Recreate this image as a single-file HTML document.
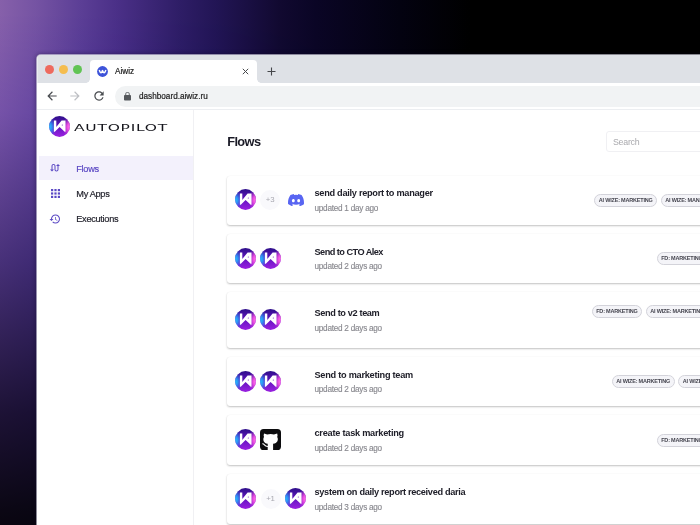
<!DOCTYPE html>
<html lang="en">
<head>
<meta charset="utf-8">
<title>Aiwiz</title>
<style>
*{box-sizing:border-box;margin:0;padding:0}
html,body{width:700px;height:525px;overflow:hidden;background:#000}
body{position:relative;font-family:"Liberation Sans",sans-serif;color:#1f1f2b}
.abs{position:absolute}
#bg{left:0;top:0;width:700px;height:525px;
 background:
  linear-gradient(to bottom,#ffffff 0px,#ffffff 13px,#dfdafc 113px,#8780b4 263px,#373050 413px,#15131e 511px,#121019 525px),
  linear-gradient(to right,#8660aa 0px,#7553a3 36px,#5c3f96 80px,#4b3088 116px,#2e1d66 180px,#221555 216px,#110930 280px,#0a0525 316px,#030210 400px,#000000 470px);
 background-blend-mode:multiply}
#win{left:37px;top:55px;width:700px;height:500px;background:#dee1e6;border-top-left-radius:4px;
 box-shadow:0 0 0 1px rgba(226,226,236,.6),0 0 4px 1px rgba(10,0,30,.4)}
#clip{left:0;top:0;width:700px;height:500px;border-top-left-radius:4px;overflow:hidden}
#in{left:-1px;top:-1px;width:701px;height:501px;will-change:transform}
#tabbar{left:0;top:0;width:701px;height:29px;background:#dee1e6;box-shadow:inset 0 1px 0 rgba(255,255,255,.28),inset 2px 0 0 rgba(255,255,255,.4)}
.tl{width:9px;height:9px;border-radius:50%;top:11px}
#tab{left:54px;top:6px;width:167px;height:23px;background:#fff;border-radius:4px 4px 0 0}
#tab:before,#tab:after{content:"";position:absolute;bottom:0;width:4px;height:4px;background:radial-gradient(circle at 0 0,rgba(255,255,255,0) 3.5px,#fff 4px)}
#tab:before{left:-4px}
#tab:after{right:-4px;transform:scaleX(-1)}
#toolbar{left:0;top:29px;width:701px;height:27px;background:#fff;border-bottom:1px solid #eceef1}
#omni{left:78.5px;top:3px;width:640px;height:21px;border-radius:10.5px;background:#f1f3f4}
.chrome-txt{-webkit-text-stroke:.2px currentColor;font-size:8.2px;white-space:nowrap;color:#222;line-height:10px}
#side{left:0;top:56px;width:158px;height:445px;background:#fff;border-right:1px solid #f0f0f3}
.nav{left:3px;width:154px;height:24.400px}
.nav span{-webkit-text-stroke:.2px currentColor;position:absolute;left:37.300px;top:7.600px;font-size:9.200px;line-height:11px;letter-spacing:-.3px;color:#25252f;white-space:nowrap}
.nav svg{position:absolute}
.nav.act{background:#f3f1fc}
.nav.act span{color:#5b49c4}
#main{left:158px;top:56px;width:543px;height:445px;background:#fff}
h1{position:absolute;left:191.200px;top:79.600px;font-size:12.8px;line-height:16px;font-weight:bold;letter-spacing:-.6px;color:#1a1a26;white-space:nowrap}
#search{left:570px;top:77px;width:140px;height:21px;border:1px solid #f0f0f3;border-radius:3px;background:#fff}
#search span{position:absolute;left:6px;top:4.5px;font-size:8.8px;line-height:11px;letter-spacing:-.25px;color:#a9a9ad}
.card{left:191px;width:520px;background:#fff;border-radius:3px;box-shadow:0 1px 2px rgba(0,0,0,.24),0 0 1px rgba(0,0,0,.05)}
.t{position:absolute;left:87.500px;margin-top:.7px;font-size:9.200px;line-height:11px;font-weight:bold;letter-spacing:-.28px;color:#20202a;white-space:nowrap}
.s{-webkit-text-stroke:.15px currentColor;position:absolute;left:87.500px;margin-top:.9px;font-size:8.200px;line-height:10px;letter-spacing:-.25px;color:#8a8a90;white-space:nowrap}
.av{position:absolute;width:21px;height:21px}
.more{position:absolute;width:20px;height:20px;border-radius:50%;background:#f9f9fc;color:#a8a8b0;font-size:7.8px;line-height:20px;text-align:center;letter-spacing:-.1px}
.tag{position:absolute;height:12.5px;border:1px solid #d3d3da;border-radius:7px;background:#f4f4f8;font-size:5.5px;font-weight:bold;letter-spacing:-.19px;line-height:10.5px;padding:0 3.700px;color:#45454f;white-space:nowrap}
</style>
</head>
<body>
<svg width="0" height="0" style="position:absolute">
 <defs>
  <linearGradient id="gv" x1="0" y1="0" x2="0" y2="1"><stop offset="0" stop-color="#2e0f8a"/><stop offset=".5" stop-color="#6414c0"/><stop offset="1" stop-color="#9a20e0"/></linearGradient>
  <radialGradient id="gl" cx="0" cy=".52" r=".5" gradientTransform="translate(0 .52) scale(.75 1) translate(0 -.52)"><stop offset="0" stop-color="#24c8ff"/><stop offset=".35" stop-color="#2aa0f8" stop-opacity=".9"/><stop offset="1" stop-color="#3060e8" stop-opacity="0"/></radialGradient>
  <radialGradient id="gr" cx="1" cy=".52" r=".5" gradientTransform="translate(1 .52) scale(.75 1) translate(-1 -.52)"><stop offset="0" stop-color="#ff78ee"/><stop offset=".35" stop-color="#fa58e2" stop-opacity=".9"/><stop offset="1" stop-color="#e040e0" stop-opacity="0"/></radialGradient>
  <symbol id="logo" viewBox="0 0 21 21">
   <circle cx="10.5" cy="10.5" r="10.4" fill="url(#gv)"/>
   <circle cx="10.5" cy="10.5" r="10.4" fill="url(#gl)"/><circle cx="10.5" cy="10.5" r="10.4" fill="url(#gr)"/>
   <path d="M4.9 4.5H7.3V10.9L12.6 4.5H16.5V15.8H15.7L10.6 10.9L5.8 15.8H4.9Z" fill="#fff"/>
   <circle cx="13.3" cy="9" r=".55" fill="#6a1fb8"/>
  </symbol>
 </defs>
</svg>
<div id="bg" class="abs"></div>
<div id="win" class="abs"><div id="clip" class="abs"><div id="in" class="abs">
 <div id="tabbar" class="abs">
  <div class="abs tl" style="left:9px;background:#ee6a5e"></div>
  <div class="abs tl" style="left:23px;background:#f5bd4f"></div>
  <div class="abs tl" style="left:36.5px;background:#61c454"></div>
  <div id="tab" class="abs">
   <svg class="abs" style="left:7px;top:6px" width="11" height="11" viewBox="0 0 11 11"><circle cx="5.5" cy="5.5" r="5.4" fill="#3d53d9"/><path d="M2.4 4.6q.8 2.2 1.6 2.2t1.5-2.2q.8 2.2 1.6 2.2t1.6-2.2" fill="none" stroke="#fff" stroke-width="1.5" stroke-linecap="round" stroke-linejoin="round"/></svg>
   <span class="abs chrome-txt" style="left:25px;top:6.5px">Aiwiz</span>
   <svg class="abs" style="left:152px;top:8px" width="7" height="7" viewBox="0 0 7 7"><path d="M.8.8l5.4 5.4M6.2.8L.8 6.2" stroke="#45474a" stroke-width="1" fill="none"/></svg>
  </div>
  <svg class="abs" style="left:231px;top:13px" width="9" height="9" viewBox="0 0 9 9"><path d="M4.5.5v8M.5 4.5h8" stroke="#45474a" stroke-width="1.1" fill="none"/></svg>
 </div>
 <div id="toolbar" class="abs">
  <svg class="abs" style="left:8.500px;top:6px" width="14" height="14" viewBox="0 0 24 24"><path fill="#4a4d51" d="M20 11H7.83l5.59-5.59L12 4l-8 8 8 8 1.41-1.41L7.83 13H20v-2z"/></svg>
  <svg class="abs" style="left:32px;top:6px" width="14" height="14" viewBox="0 0 24 24"><path fill="#bdbfc3" d="M12 4l-1.41 1.41L16.17 11H4v2h12.17l-5.58 5.59L12 20l8-8z"/></svg>
  <svg class="abs" style="left:55.500px;top:6px" width="14" height="14" viewBox="0 0 24 24"><path fill="#4a4d51" d="M17.65 6.35C16.2 4.9 14.21 4 12 4c-4.42 0-7.99 3.58-7.99 8s3.57 8 7.99 8c3.73 0 6.84-2.55 7.73-6h-2.08c-.82 2.33-3.04 4-5.65 4-3.31 0-6-2.69-6-6s2.69-6 6-6c1.66 0 3.14.69 4.22 1.78L13 11h7V4l-2.35 2.350z"/></svg>
  <div id="omni" class="abs">
   <svg class="abs" style="left:9.300px;top:6px" width="7" height="8.500" viewBox="0 0 16 20" preserveAspectRatio="none"><path fill="#55585c" d="M14 7h-1V5c0-2.76-2.240-5-5-5S3 2.240 3 5v2H2C.9 7 0 7.900 0 9v9c0 1.100.9 2 2 2h12c1.100 0 2-.9 2-2V9c0-1.100-.9-2-2-2zm-3 0H5V5c0-1.660 1.340-3 3-3s3 1.340 3 3v2z"/></svg>
   <span class="abs chrome-txt" style="left:24.500px;top:5.500px">dashboard.aiwiz.ru</span>
  </div>
 </div>
 <div id="side" class="abs">
  <svg class="abs" style="left:12.5px;top:6px" width="21" height="21"><use href="#logo"/></svg>
  <svg class="abs" style="left:38px;top:11px" width="100" height="12" viewBox="0 0 100 12"><text x="0" y="9.700" font-family="DejaVu Sans, Liberation Sans, sans-serif" font-size="9.300" letter-spacing=".45" fill="#15151c" textLength="94" lengthAdjust="spacingAndGlyphs">AUTOPILOT</text></svg>
  <div class="abs nav act" style="top:46px"><svg style="left:9.800px;top:6px" width="12" height="12" viewBox="0 0 24 24"><path fill="#5b49c4" d="M18 4l-4 4h3v7c0 1.100-.9 2-2 2s-2-.9-2-2V8c0-2.210-1.790-4-4-4S5 5.790 5 8v7H2l4 4 4-4H7V8c0-1.100.9-2 2-2s2 .9 2 2v7c0 2.210 1.790 4 4 4s4-1.790 4-4V8h3l-4-4z"/></svg><span>Flows</span></div>
  <div class="abs nav" style="top:71px"><svg style="left:12px;top:8px" width="9" height="9" viewBox="0 0 9 9"><g fill="#5b49c4"><rect x="0" y="0" width="2.200" height="2.200"/><rect x="3.400" y="0" width="2.200" height="2.200"/><rect x="6.800" y="0" width="2.200" height="2.200"/><rect x="0" y="3.400" width="2.200" height="2.200"/><rect x="3.400" y="3.400" width="2.200" height="2.200"/><rect x="6.800" y="3.400" width="2.200" height="2.200"/><rect x="0" y="6.800" width="2.200" height="2.200"/><rect x="3.400" y="6.800" width="2.200" height="2.200"/><rect x="6.800" y="6.800" width="2.200" height="2.200"/></g></svg><span>My Apps</span></div>
  <div class="abs nav" style="top:96px"><svg style="left:9.800px;top:6.500px" width="12" height="12" viewBox="0 0 24 24"><path fill="#5b49c4" d="M13 3a9 9 0 0 0-9 9H1l3.890 3.890.07.140L9 12H6c0-3.870 3.130-7 7-7s7 3.130 7 7-3.130 7-7 7c-1.930 0-3.680-.79-4.940-2.060l-1.420 1.420A8.954 8.954 0 0 0 13 21a9 9 0 0 0 0-18zm-1 5v5l4.280 2.540.72-1.210-3.500-2.080V8H12z"/></svg><span>Executions</span></div>
 </div>
 <div id="main" class="abs"></div>
 <h1>Flows</h1>
 <div id="search" class="abs"><span>Search</span></div>

 <div class="abs card" style="top:122px;height:49px">
  <svg class="av" style="left:8px;top:13px"><use href="#logo"/></svg>
  <div class="more" style="left:33.200px;top:13.500px">+3</div>
  <svg class="av" style="left:60.500px;top:18.200px;width:16px;height:12.200px" viewBox="0 0 127.140 96.360"><path fill="#5865f2" d="M107.700 8.070A105.150 105.150 0 0 0 81.470 0a72.060 72.060 0 0 0-3.360 6.830 97.680 97.680 0 0 0-29.110 0A72.370 72.370 0 0 0 45.640 0a105.890 105.890 0 0 0-26.250 8.090C2.790 32.650-1.710 56.600.54 80.210a105.730 105.730 0 0 0 32.170 16.150 77.700 77.700 0 0 0 6.890-11.110 68.420 68.420 0 0 1-10.850-5.180c.91-.66 1.800-1.340 2.660-2a75.570 75.570 0 0 0 64.320 0c.87.710 1.760 1.390 2.660 2a68.680 68.680 0 0 1-10.870 5.190 77 77 0 0 0 6.890 11.100 105.250 105.250 0 0 0 32.190-16.140c2.640-27.380-4.510-51.110-18.900-72.150zM42.450 65.690C36.180 65.690 31 60 31 53s5-12.740 11.430-12.740S54 46 53.890 53s-5.050 12.690-11.440 12.690zm42.240 0C78.410 65.690 73.250 60 73.250 53s5-12.740 11.440-12.740S96.230 46 96.120 53s-5.040 12.690-11.430 12.690z"/></svg>
  <div class="t" style="top:11.500px">send daily report to manager</div>
  <div class="s" style="top:27.500px">updated 1 day ago</div>
  <div class="tag" style="left:367px;top:18px">AI WIZE: MARKETING</div>
  <div class="tag" style="left:433.500px;top:18px">AI WIZE: MANAGEMENT</div>
 </div>

 <div class="abs card" style="top:180px;height:49px">
  <svg class="av" style="left:8px;top:14px"><use href="#logo"/></svg>
  <svg class="av" style="left:33px;top:14px"><use href="#logo"/></svg>
  <div class="t" style="top:12.700px;letter-spacing:-0.54px">Send to CTO Alex</div>
  <div class="s" style="top:27.500px">updated 2 days ago</div>
  <div class="tag" style="left:429.500px;top:18px">FD: MARKETING</div>
 </div>

 <div class="abs card" style="top:238px;height:56px">
  <svg class="av" style="left:8px;top:17px"><use href="#logo"/></svg>
  <svg class="av" style="left:33px;top:17px"><use href="#logo"/></svg>
  <div class="t" style="top:15.500px;letter-spacing:-0.37px">Send to v2 team</div>
  <div class="s" style="top:31px">updated 2 days ago</div>
  <div class="tag" style="left:364.500px;top:13px">FD: MARKETING</div>
  <div class="tag" style="left:418.500px;top:13px">AI WIZE: MARKETING</div>
 </div>

 <div class="abs card" style="top:303px;height:49px">
  <svg class="av" style="left:8px;top:14px"><use href="#logo"/></svg>
  <svg class="av" style="left:33px;top:14px"><use href="#logo"/></svg>
  <div class="t" style="top:12.600px;letter-spacing:-0.26px">Send to marketing team</div>
  <div class="s" style="top:27.500px">updated 2 days ago</div>
  <div class="tag" style="left:384.500px;top:18px">AI WIZE: MARKETING</div>
  <div class="tag" style="left:451px;top:18px">AI WIZE: MANAGEMENT</div>
 </div>

 <div class="abs card" style="top:361px;height:49.500px">
  <svg class="av" style="left:8px;top:14px"><use href="#logo"/></svg>
  <svg class="av" style="left:33.200px;top:14.300px" viewBox="0 0 21 21"><rect width="21" height="21" rx="3.600" fill="#0c0c0e"/><g fill="#fff"><path d="M4 4.400L7.200 5.400Q10.600 4.700 14 5.400L17.200 4.400Q17.900 6.400 17.200 8C18.700 10.500 17.700 14.300 13.100 14.800V21H7.700V14.800C3.500 14.300 2.500 10.500 4 8Q3.300 6.400 4 4.400Z"/></g><path d="M2.700 14.800C4.700 14.900 4.300 17.700 7.700 17.500" fill="none" stroke="#fff" stroke-width="1.100" stroke-linecap="round"/></svg>
  <div class="t" style="top:12.500px;letter-spacing:-0.24px">create task marketing</div>
  <div class="s" style="top:28px">updated 2 days ago</div>
  <div class="tag" style="left:429.500px;top:19px">FD: MARKETING</div>
 </div>

 <div class="abs card" style="top:420px;height:49.500px">
  <svg class="av" style="left:8px;top:14px"><use href="#logo"/></svg>
  <div class="more" style="left:33.500px;top:14.500px">+1</div>
  <svg class="av" style="left:57.600px;top:14px"><use href="#logo"/></svg>
  <div class="t" style="top:12.500px;letter-spacing:-0.31px">system on daily report received daria</div>
  <div class="s" style="top:28px">updated 3 days ago</div>
 </div>
</div></div></div>
</body>
</html>
